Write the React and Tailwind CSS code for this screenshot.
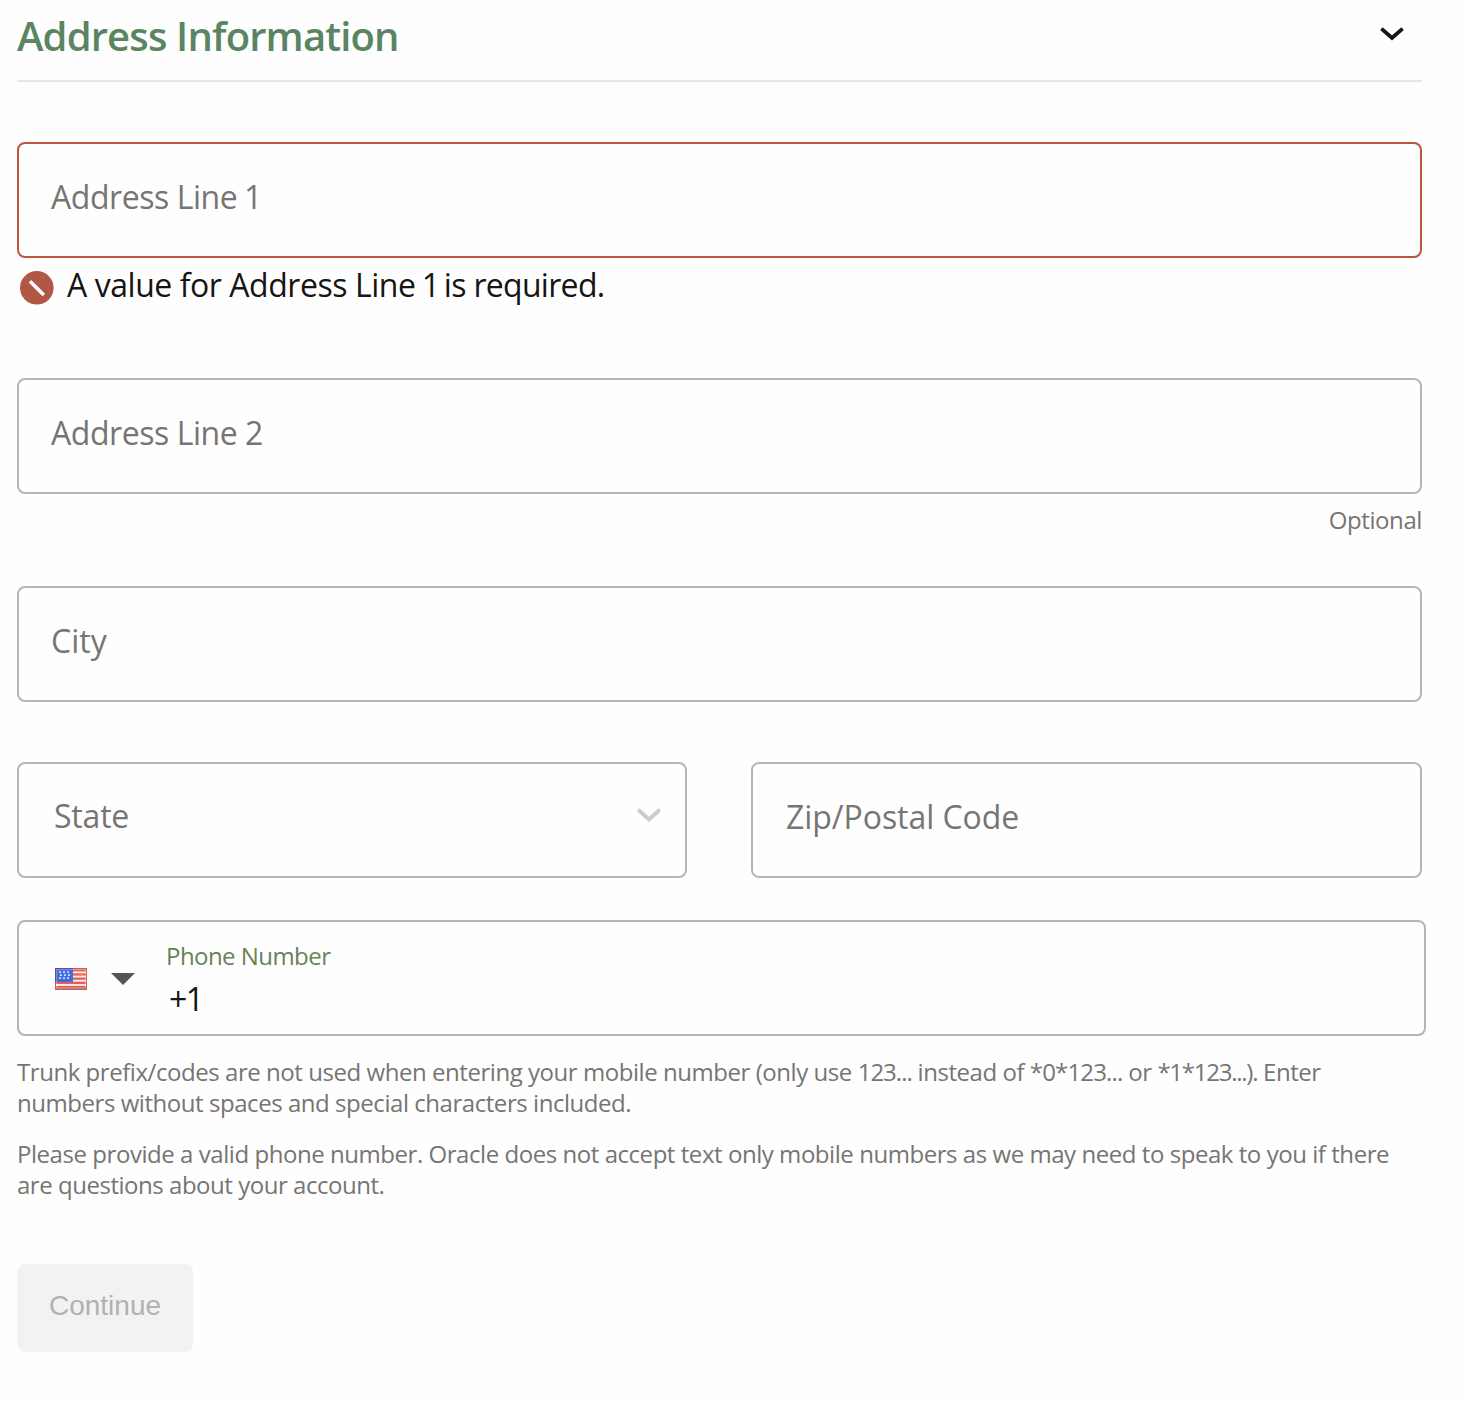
import React from "react";

function Field({ className = "", error = false, children }) {
  return (
    <div
      className={`flex h-[116px] items-center rounded-lg border-2 pb-[7px] text-[32px] leading-none text-[#767573] ${
        error ? "border-[#bd5341]" : "border-[#b5b5b5]"
      } ${className}`}
    >
      {children}
    </div>
  );
}

function ErrorIcon() {
  return (
    <svg className="ml-[3px] mt-[13px] size-[34px] shrink-0" viewBox="0 0 34 34">
      <circle cx="16.8" cy="16.8" r="16.8" fill="#b05745" />
      <path d="M10 10.2 23.8 24" stroke="#fff" strokeWidth="3.6" fill="none" />
    </svg>
  );
}

const STARS = [
  [5, 4], [9, 4], [13, 4],
  [6, 7], [10, 7], [14, 7],
  [5, 10], [9, 10], [13, 10],
];

function UsFlag() {
  return (
    <svg className="mt-0.5 h-[22px] w-8 shrink-0" viewBox="0 0 32 22">
      <rect width="32" height="22" fill="#e0605a" />
      {[3.4, 7.6, 11.8, 16].map((y) => (
        <rect key={y} x="1" y={y} width="30" height="1.9" fill="#fbe9e6" />
      ))}
      <rect y="20" width="32" height="2" fill="#c26a60" />
      <rect width="18" height="14" fill="#3f6fdc" />
      <path d="M0 0H18V2H2V14H0Z" fill="#4a4fb4" />
      {STARS.map(([x, y]) => (
        <rect key={`${x}-${y}`} x={x - 1} y={y - 0.8} width="2" height="1.8" fill="#c4d7fb" />
      ))}
      <rect x="26" y="6" width="2" height="2" fill="#f5a04a" />
      <rect x="1.5" y="1.5" width="29" height="18.5" fill="none" stroke="#fff" strokeOpacity="0.35" />
      <rect x="0.5" y="0.5" width="31" height="21" fill="none" stroke="#7d5068" strokeOpacity="0.2" />
    </svg>
  );
}

export default function App() {
  return (
    <main className="h-[1402px] overflow-hidden bg-[#fefefe] pl-[17px] font-['Open_Sans',sans-serif]">
      <header className="flex h-[82px] w-[1405px] justify-between border-b-2 border-[#e6e6e6]">
        <h1 className="text-[40px] font-semibold leading-[71px] tracking-[-0.85px] text-[#5b8462]">
          Address Information
        </h1>
        <svg className="mr-[18px] mt-[26px] h-4 w-6" viewBox="0 0 24 16">
          <path d="M1.4 2.6 12 12 22.6 2.6" fill="none" stroke="#161513" strokeWidth="3.8" />
        </svg>
      </header>

      <div className="w-[1405px]">
        <Field error className="mt-[60px] pl-8">
          <span className="whitespace-pre tracking-[-0.45px]">
            Address Line<span className="tracking-[-1.6px]"> </span>1
          </span>
        </Field>
        <div className="flex h-[60px] items-start">
          <ErrorIcon />
          <p className="ml-[13px] whitespace-pre text-[32px] leading-[54px] tracking-[-0.45px] text-[#161513]">
            A value for Address Line<span className="tracking-[-2.2px]"> 1 </span>
            <span className="tracking-[-0.7px]">is required.</span>
          </p>
        </div>

        <Field className="mt-[60px] pl-8">
          <span className="tracking-[-0.45px]">Address Line 2</span>
        </Field>
        <p className="h-[92px] text-right text-2xl leading-[52px] tracking-[-0.4px] text-[#767573]">Optional</p>

        <Field className="pl-8">City</Field>

        <div className="mt-[60px] grid grid-cols-[670px_671px] gap-16">
          <Field className="justify-between pl-[35px] pr-[23px]">
            <span className="-mt-0.5 tracking-[-0.2px]">State</span>
            <svg className="-mt-1 h-4 w-[26px]" viewBox="0 0 26 16">
              <path
                d="M3.4 3.7 13 12.4 22.6 3.7"
                fill="none"
                stroke="#cccccc"
                strokeWidth="4"
                strokeLinecap="round"
                strokeLinejoin="round"
              />
            </svg>
          </Field>
          <Field className="pl-[33px] tracking-[-0.05px]">Zip/Postal Code</Field>
        </div>
      </div>

      <div className="mt-[42px] flex h-[116px] w-[1409px] items-center rounded-lg border-2 border-[#b5b5b5] pl-9">
        <UsFlag />
        <svg className="ml-6 mt-0.5 h-3 w-6" viewBox="0 0 24 12">
          <path d="M0 0H24L12 12Z" fill="#555" />
        </svg>
        <div className="ml-[31px] flex h-full flex-col pt-[15px]">
          <span className="text-2xl leading-[38px] tracking-[-0.55px] text-[#688259]">Phone Number</span>
          <span className="pl-[3px] text-[32px] leading-[47px] tracking-[-1.5px] text-[#161513]">+1</span>
        </div>
      </div>

      <div className="mt-5 w-[1409px] whitespace-nowrap text-2xl leading-[31px] text-[#767573]">
        <p>
          <span className="tracking-[-0.45px]">
            Trunk prefix/codes are not used when entering your mobile number (only use{" "}
            <span className="tracking-[-1px]">123...</span> instead of{" "}
            <span className="tracking-[-0.85px]">*0*123...</span> or{" "}
            <span className="tracking-[-1.25px]">*1*123...).</span> Enter
          </span>
          <br />
          <span className="tracking-[-0.45px]">numbers without spaces and special characters included.</span>
        </p>
        <p className="mt-5">
          <span className="tracking-[-0.45px]">
            Please provide a valid phone number. Oracle does not accept text only mobile numbers as we may need to speak
            to you if there
          </span>
          <br />
          <span className="tracking-[-0.47px]">are questions about your account.</span>
        </p>
      </div>

      <button
        disabled
        className="mt-16 flex h-[88px] w-44 items-center justify-center rounded-lg bg-[#f2f2f2] pb-[5px] font-['Liberation_Sans',sans-serif] text-[28px] leading-8 text-[#b1b1b1]"
      >
        Continue
      </button>
    </main>
  );
}
